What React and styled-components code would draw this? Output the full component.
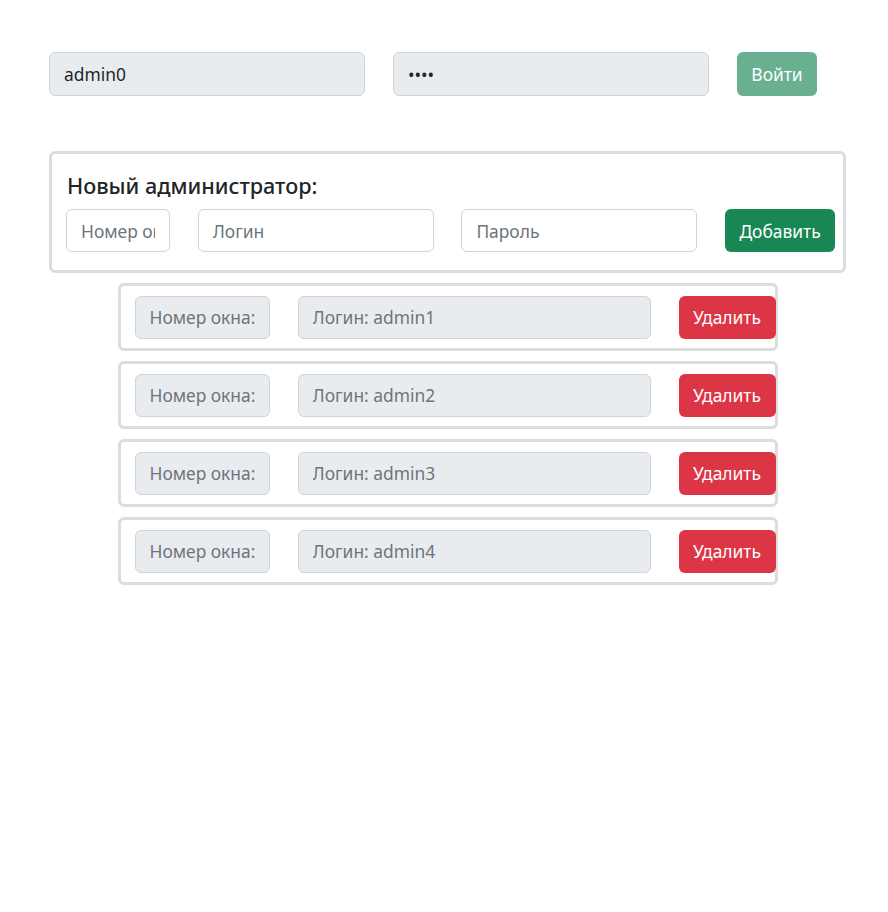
import React, { useState } from "react";
import styled, { createGlobalStyle } from "styled-components";

const GlobalStyle = createGlobalStyle`
  body {
    margin: 0;
    background: #fff;
    font-family: "Noto Sans", "Open Sans", sans-serif;
    color: #212529;
  }
  * { box-sizing: border-box; }
`;

const admins = [
  { id: 1, login: "admin1" },
  { id: 2, login: "admin2" },
  { id: 3, login: "admin3" },
  { id: 4, login: "admin4" },
];

export default function App() {
  const [login, setLogin] = useState("admin0");
  const [password, setPassword] = useState("1234");

  return (
    <Page>
      <GlobalStyle />
      <LoginRow>
        <Field
          $w={316}
          value={login}
          onChange={(e) => setLogin(e.target.value)}
          $filled
        />
        <Field
          $w={316}
          type="password"
          value={password}
          onChange={(e) => setPassword(e.target.value)}
          $filled
        />
        <Button $w={80} $variant="login" disabled>
          Войти
        </Button>
      </LoginRow>

      <NewCard>
        <Title>Новый администратор:</Title>
        <Controls>
          <Field $w={104} placeholder="Номер окна" />
          <Field $w={236} placeholder="Логин" />
          <Field $w={236} placeholder="Пароль" />
          <Button $w={110} $variant="add">
            Добавить
          </Button>
        </Controls>
      </NewCard>

      <List>
        {admins.map((a) => (
          <AdminCard key={a.id}>
            <Field $w={135} $filled disabled placeholder="Номер окна:" />
            <Field $w={353} $filled disabled placeholder={`Логин: ${a.login}`} />
            <Button $w={97} $variant="delete">
              Удалить
            </Button>
          </AdminCard>
        ))}
      </List>
    </Page>
  );
}

const Page = styled.div`
  width: 797px;
  margin-left: 49px;
  padding-top: 52px;
`;

const LoginRow = styled.div`
  display: flex;
  gap: 28px;
  margin-bottom: 55px;
`;

const Field = styled.input`
  width: ${(p) => p.$w}px;
  height: 44px;
  flex-shrink: 0;
  padding: 0 14px;
  border: 1px solid #ced4da;
  border-radius: 6px;
  background: ${(p) => (p.$filled ? "#e9ecef" : "#fff")};
  color: #212529;
  font-family: inherit;
  font-size: 17.4px;
  outline: none;

  &::placeholder {
    color: #6c757d;
  }
`;

const colors = {
  login: "#198754",
  add: "#198754",
  delete: "#dc3545",
};

const Button = styled.button`
  width: ${(p) => p.$w}px;
  height: 44px;
  flex-shrink: 0;
  padding: 0;
  border: none;
  border-radius: 6px;
  background: ${(p) => colors[p.$variant]};
  color: #fff;
  font-family: inherit;
  font-size: 17.4px;
  cursor: pointer;

  &:disabled {
    opacity: 0.65;
    cursor: default;
  }
`;

const NewCard = styled.div`
  border: 3px solid #dcdcdc;
  border-radius: 6px;
  padding: 20px 0 18px 14px;
  height: 122px;
`;

const Title = styled.div`
  font-size: 21.6px;
  font-weight: 500;
  line-height: 24px;
  margin: 0 0 11px 1px;
`;

const Controls = styled.div`
  display: flex;
  gap: 27.7px;
  height: 43px;

  & > * {
    height: 43px;
  }
`;

const List = styled.div`
  display: flex;
  flex-direction: column;
  align-items: center;
  gap: 10px;
  margin-top: 10px;
`;

const AdminCard = styled.div`
  width: 660px;
  height: 68px;
  display: flex;
  align-items: center;
  gap: 28px;
  padding-left: 14px;
  border: 3px solid #dcdcdc;
  border-radius: 6px;

  & > * {
    height: 43px;
  }
`;
